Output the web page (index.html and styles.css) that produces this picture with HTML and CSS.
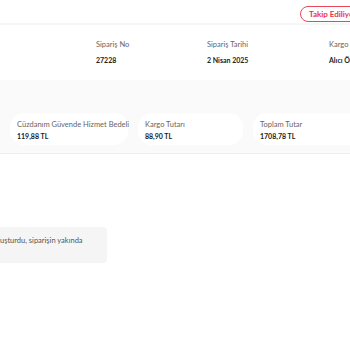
FILE: index.html
```html
<!DOCTYPE html>
<html lang="tr">

<head>
    <meta charset="UTF-8">
    <meta name="viewport" content="width=device-width, initial-scale=1.0">
    <title>Sipariş Detayı</title>
    <link rel="stylesheet" href="styles.css">
</head>

<body>
    <div class="page">
        <div class="topbar">
            <span class="status">Takip Ediliyor</span>
        </div>

        <div class="order-info">
            <div class="info">
                <span class="label">Sipariş No</span>
                <span class="value">27228</span>
            </div>
            <div class="info">
                <span class="label">Sipariş Tarihi</span>
                <span class="value">2 Nisan 2025</span>
            </div>
            <div class="info">
                <span class="label">Kargo</span>
                <span class="value">Alıcı Öder</span>
            </div>
        </div>

        <div class="totals">
            <div class="total-card">
                <span class="label">Cüzdanım Güvende Hizmet Bedeli</span>
                <span class="value">119,88 TL</span>
            </div>
            <div class="total-card">
                <span class="label">Kargo Tutarı</span>
                <span class="value">88,90 TL</span>
            </div>
            <div class="total-card">
                <span class="label">Toplam Tutar</span>
                <span class="value">1708,78 TL</span>
            </div>
        </div>

        <div class="history">
            <div class="note">Satıcı kargo kaydını oluşturdu, siparişin yakında</div>
        </div>
    </div>
</body>

</html>
```

FILE: styles.css
```css
* {
    box-sizing: border-box;
}

html,
body {
    margin: 0;
    padding: 0;
    background-color: #fff;
    overflow: hidden;
}

body {
    width: 350px;
    height: 350px;
    font-family: "Lato", "Liberation Sans", sans-serif;
    color: #333;
}

.page {
    width: 460px;
}

.topbar {
    height: 23px;
    padding-left: 300px;
    padding-top: 1px;
}

.status {
    display: inline-block;
    height: 16px;
    padding: 0 8px;
    line-height: 14px;
    border: 1px solid #e9455c;
    border-radius: 8px;
    font-size: 8px;
    font-weight: 700;
    color: #e5364f;
    white-space: nowrap;
}

.order-info {
    display: flex;
    height: 57px;
    padding: 16px 0 0 96px;
    border-top: 2px solid #f6f6f6;
    background-color: #fff;
}

.info {
    display: flex;
    flex-direction: column;
    gap: 7px;
}

.info:nth-child(1) {
    width: 111px;
}

.info:nth-child(2) {
    width: 122px;
}

.label {
    font-size: 7.5px;
    color: #666;
    line-height: 8px;
    white-space: nowrap;
}

.value {
    font-size: 7px;
    font-weight: 700;
    color: #222;
    line-height: 8px;
    white-space: nowrap;
}

.totals {
    display: flex;
    gap: 10px;
    height: 74px;
    padding: 33px 0 0 10px;
    background-color: #fafafa;
    border-bottom: 1px solid #ededed;
}

.total-card {
    display: flex;
    flex-direction: column;
    gap: 3px;
    height: 32px;
    padding: 8px 7px 0;
    border-radius: 14px;
    background-color: #fff;
}

.total-card:nth-child(1) {
    width: 118px;
}

.total-card:nth-child(2) {
    width: 105px;
}

.total-card:nth-child(3) {
    width: 130px;
}

.history {
    padding-top: 73px;
}

.note {
    width: 188px;
    height: 36px;
    margin-left: -81px;
    padding: 9px 0 0 10px;
    border-radius: 4px;
    background-color: #f5f5f5;
    font-size: 7.5px;
    color: #555;
    white-space: nowrap;
}
```
